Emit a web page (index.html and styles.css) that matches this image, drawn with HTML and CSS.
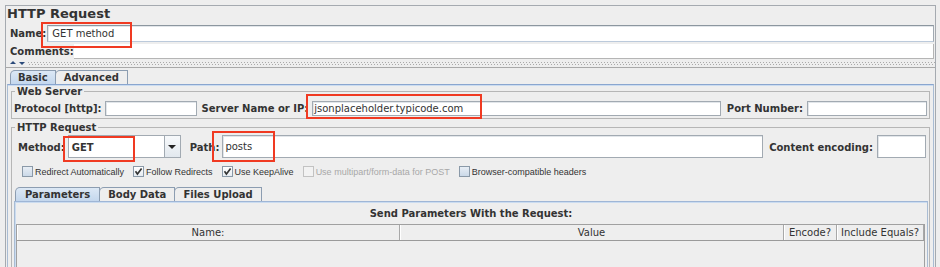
FILE: index.html
```html
<!DOCTYPE html>
<html lang="en">
<head>
<meta charset="utf-8">
<title>HTTP Request</title>
<link rel="stylesheet" href="styles.css">
</head>
<body>
<div class="frame">
  <div class="title">HTTP Request</div>
  <div class="row name-row">
    <span class="lbl">Name:</span>
    <div class="field name-field">GET method</div>
  </div>
  <div class="row comments-row">
    <span class="lbl">Comments:</span>
    <div class="comments-field"></div>
  </div>
  <div class="splitter">
    <span class="arrow-up"></span><span class="arrow-down"></span>
    <div class="dots"></div>
  </div>
  <div class="tabs-area">
    <div class="tabs">
      <div class="tab selected tab-basic">Basic</div>
      <div class="tab">Advanced</div>
    </div>
    <div class="tab-panel">
      <fieldset class="group ws-group">
        <legend>Web Server</legend>
        <div class="ws-row">
          <span class="lbl">Protocol [http]:</span>
          <div class="field proto"></div>
          <span class="lbl">Server Name or IP:</span>
          <div class="field server">jsonplaceholder.typicode.com</div>
          <span class="lbl port-lbl">Port Number:</span>
          <div class="field port"></div>
        </div>
      </fieldset>
      <fieldset class="group req-group">
        <legend>HTTP Request</legend>
        <div class="method-row">
          <span class="lbl">Method:</span>
          <div class="combo"><span class="combo-text">GET</span><span class="combo-btn"><span class="tri"></span></span></div>
          <span class="lbl path-lbl">Path:</span>
          <div class="field path">posts</div>
          <span class="lbl enc-lbl">Content encoding:</span>
          <div class="field enc"></div>
        </div>
        <div class="checks">
          <label class="check"><span class="box"></span>Redirect Automatically</label>
          <label class="check"><span class="box on"><svg width="9" height="9" viewBox="0 0 9 9"><path d="M1.5 4.2 L3.4 7 L7.6 1.4" fill="none" stroke="#333" stroke-width="1.6"/></svg></span>Follow Redirects</label>
          <label class="check"><span class="box on"><svg width="9" height="9" viewBox="0 0 9 9"><path d="M1.5 4.2 L3.4 7 L7.6 1.4" fill="none" stroke="#333" stroke-width="1.6"/></svg></span>Use KeepAlive</label>
          <label class="check disabled"><span class="box"></span>Use multipart/form-data for POST</label>
          <label class="check"><span class="box"></span>Browser-compatible headers</label>
        </div>
        <div class="subtabs-area">
          <div class="tabs sub-tabs">
            <div class="tab selected tab-params">Parameters</div>
            <div class="tab">Body Data</div>
            <div class="tab">Files Upload</div>
          </div>
          <div class="sub-panel">
            <div class="params-title">Send Parameters With the Request:</div>
            <div class="table">
              <div class="thead">
                <div class="th">Name:</div>
                <div class="th">Value</div>
                <div class="th">Encode?</div>
                <div class="th">Include Equals?</div>
              </div>
              <div class="tbody"></div>
            </div>
          </div>
        </div>
      </fieldset>
    </div>
  </div>
</div>
<div class="mark m-name"></div>
<div class="mark m-server"></div>
<div class="mark m-method"></div>
<div class="mark m-path"></div>
</body>
</html>
```

FILE: styles.css
```css
* { box-sizing: border-box; }
html, body { margin: 0; width: 940px; height: 267px; overflow: hidden; }
body {
  position: relative;
  background: #eeeeee;
  color: #333333;
  font-family: "DejaVu Sans", "Liberation Sans", sans-serif;
  font-size: 10px;
  line-height: 12px;
}

.frame {
  margin: 5px 0 0 5px;
  width: 931px;
  height: 262px;
  border: 1px solid #a5aab0;
  border-bottom: 0;
  display: flex;
  flex-direction: column;
}
.frame > * { flex-shrink: 0; }
.title {
  padding-left: 1px;
  font-size: 13px;
  font-weight: bold;
  line-height: 15px;
  margin-bottom: 3px;
}
.lbl { font-weight: bold; white-space: nowrap; }
.row { display: flex; align-items: center; }

.field {
  background: #ffffff;
  border: 1px solid #a2aab2;
  box-shadow: inset 1px 1px 0 #e2e6ea;
  padding-left: 2px;
  white-space: nowrap;
  overflow: hidden;
}
.name-row { height: 19px; padding: 0 1px 0 4px; gap: 1px; }
.name-field {
  flex: 1;
  height: 17px;
  line-height: 15px;
  padding-left: 4px;
  border-top-color: #8c969f;
  border-bottom-color: #bccadb;
}
.comments-row { height: 15px; margin-top: 1px; padding: 0 1px 0 4px; }
.comments-field {
  flex: 1;
  align-self: stretch;
  background: #ffffff;
  border-bottom: 1px solid #b5b5b5;
  border-right: 1px solid #b5b5b5;
}

.splitter {
  height: 8px;
  display: flex;
  align-items: flex-start;
  padding: 2px 0 0 4px;
}
.arrow-up {
  width: 0; height: 0;
  border-left: 3px solid transparent;
  border-right: 3px solid transparent;
  border-bottom: 3px solid #2b4a7a;
}
.arrow-down {
  width: 0; height: 0;
  margin: 1px 0 0 3px;
  border-left: 3px solid transparent;
  border-right: 3px solid transparent;
  border-top: 3px solid #2b4a7a;
}
.dots {
  flex: 1;
  margin: 1px 0 0 3px;
  height: 3px;
  background-image:
    repeating-linear-gradient(90deg, #aaaaaa 0 1px, transparent 1px 3px),
    repeating-linear-gradient(90deg, #aaaaaa 0 1px, transparent 1px 3px);
  background-size: 100% 1px, 100% 1px;
  background-position: 0 0, 1px 2px;
  background-repeat: no-repeat;
}

.tabs-area {
  border-top: 1px solid #a9a9a9;
  padding-top: 2px;
}
.tabs { display: flex; padding-left: 4px; }
.sub-tabs { padding-left: 1px; }
.tab {
  height: 14px;
  line-height: 13px;
  padding: 0 8px;
  border: 1px solid #8c9db1;
  border-bottom: 0;
  border-top-left-radius: 5px;
  margin-left: -1px;
  font-weight: bold;
  background: #eeeeee;
  white-space: nowrap;
}
.tabs .tab:first-child { margin-left: 0; }
.tab.selected { background: linear-gradient(#dce8f5, #c4d7ed); }
.tab-basic { padding: 0 7px; }
.tab-params { padding: 0 9px; }

.tab-panel {
  margin: 0 1px;
  height: 220px;
  border: 1px solid #a9bcd3;
  border-top-color: #8aa6cf;
  box-shadow: inset 0 1px 0 #cbdcf0;
}

.group {
  margin: 0 3px;
  padding: 0;
  min-width: 0;
  border: 1px solid #b6b6b6;
}
.group legend {
  margin-left: 3px;
  padding: 2px 2px 0;
  font-weight: bold;
  line-height: 12px;
}
.ws-group { margin-top: -1px; padding: 2px 0 1px; }
.ws-row {
  display: flex;
  align-items: center;
  height: 17px;
  padding: 0 2px;
  gap: 4px;
}
.proto { width: 92px; height: 15px; }
.server { flex: 1; height: 15px; line-height: 13px; padding-left: 1px; }
.port-lbl { margin-left: 2px; }
.port { width: 120px; height: 15px; }

.req-group { margin-top: 1px; padding: 1px 0 0; }
.method-row {
  display: flex;
  align-items: center;
  height: 23px;
  padding: 0 3px 0 6px;
  gap: 3px;
}
.method-row .lbl { padding-top: 3px; }
.combo {
  width: 113px;
  height: 23px;
  display: flex;
  background: #ffffff;
  border: 1px solid #a2aab2;
}
.combo-text {
  flex: 1;
  font-weight: bold;
  line-height: 23px;
  padding-left: 3px;
}
.combo-btn {
  width: 16px;
  border-left: 1px solid #a2aab2;
  background: linear-gradient(#f7f9fb, #e2e8ee);
  display: flex;
  align-items: center;
  justify-content: center;
}
.tri {
  width: 0; height: 0;
  border-left: 4px solid transparent;
  border-right: 4px solid transparent;
  border-top: 4px solid #222222;
}
.path-lbl { margin-left: 6px; }
.path { flex: 1; height: 23px; line-height: 22px; padding-left: 2px; }
.enc-lbl { margin-left: 3px; }
.enc { width: 49px; height: 23px; margin-left: 1px; }

.checks {
  display: flex;
  align-items: center;
  height: 13px;
  margin-top: 7px;
  padding-left: 10px;
  gap: 9px;
  font-family: "Liberation Sans", "DejaVu Sans", sans-serif;
  font-size: 9px;
}
.check { display: flex; align-items: center; gap: 2px; white-space: nowrap; }
.box {
  width: 11px;
  height: 11px;
  border: 1px solid #8a99a8;
  background: linear-gradient(#e8eef5, #cbd9e8);
  display: flex;
  align-items: center;
  justify-content: center;
}
.box.on { background: linear-gradient(#ffffff, #e6ecf2); }
.check.disabled { color: #a8a8a8; }
.check.disabled .box { border-color: #c2c2c2; background: #f2f2f2; }

.subtabs-area { margin: 9px 1px 0 2px; }
.sub-panel {
  height: 120px;
  border: 1px solid #a9bcd3;
  border-top-color: #9fb6d6;
  box-shadow: inset 0 1px 0 #cbdcf0, inset 1px 0 0 #cbdcf0;
}
.params-title {
  margin-top: 5px;
  text-align: center;
  font-weight: bold;
  line-height: 14px;
}
.table {
  margin: 3px 2px 0 1px;
  height: 80px;
  border: 1px solid #a0a0a0;
  border-bottom: 0;
}
.thead {
  display: grid;
  grid-template-columns: 383px 384px 53px 87px;
  border-bottom: 1px solid #9a9a9a;
}
.th {
  height: 15px;
  line-height: 15px;
  text-align: center;
  border-right: 1px solid #a8a8a8;
  box-shadow: inset 1px 0 0 #ffffff;
  white-space: nowrap;
}

.mark {
  position: absolute;
  border: 2px solid #f03a22;
}
.m-name { left: 41px; top: 22px; width: 91px; height: 26px; }
.m-server { left: 306px; top: 94px; width: 176px; height: 25px; }
.m-method { left: 63px; top: 136px; width: 72px; height: 26px; }
.m-path { left: 212px; top: 131px; width: 63px; height: 31px; }
```
